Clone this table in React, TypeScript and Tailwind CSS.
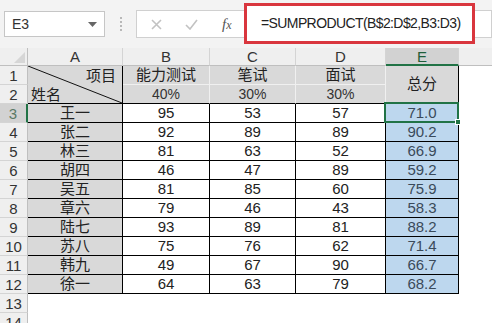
import React from 'react';

const rows = [
  ['王一', 95, 53, 57, '71.0'],
  ['张二', 92, 89, 89, '90.2'],
  ['林三', 81, 63, 52, '66.9'],
  ['胡四', 46, 47, 89, '59.2'],
  ['吴五', 81, 85, 60, '75.9'],
  ['章六', 79, 46, 43, '58.3'],
  ['陆七', 93, 89, 81, '88.2'],
  ['苏八', 75, 76, 62, '71.4'],
  ['韩九', 49, 67, 90, '66.7'],
  ['徐一', 64, 63, 79, '68.2'],
];

const font = "font-['Liberation_Sans','Noto_Sans_CJK_SC',sans-serif]";

function ColHead({ label, active }: { label: string; active?: boolean }) {
  return (
    <div
      className={`flex items-center justify-center text-[15px] leading-none border-r border-[#d4d4d4] ${
        active ? 'bg-[#d2d2d2] text-[#1e5e3a] border-b-2 border-b-[#217346]' : 'bg-[#efefef] text-[#333] border-b border-b-[#bfbfbf]'
      }`}
    >
      {label}
    </div>
  );
}

function RowHead({ n, active }: { n: number; active?: boolean }) {
  return (
    <div
      className={`flex items-center justify-center text-[15px] leading-none border-b border-[#d4d4d4] ${
        active ? 'bg-[#d2d2d2] text-[#5a7a66] border-r-2 border-r-[#217346]' : 'bg-[#efefef] text-[#333] border-r border-r-[#bfbfbf]'
      }`}
    >
      {n}
    </div>
  );
}

export default function App() {
  return (
    <div className={`w-[492px] h-[323px] overflow-hidden bg-white ${font}`}>
      {/* formula bar */}
      <div className="h-[48px] bg-[#f3f3f3] flex items-center relative">
        <div className="ml-[4px] w-[101px] h-[26px] bg-white border border-[#c6c6c6] flex items-center justify-between pl-[7px] pr-[7px] text-[14px] text-[#333]">
          <span>E3</span>
          <svg width="9" height="5" viewBox="0 0 9 5">
            <path d="M0 0 L9 0 L4.5 5 Z" fill="#666" />
          </svg>
        </div>
        <div className="ml-[15px] flex flex-col gap-[2px]">
          <span className="w-[2px] h-[2px] bg-[#b8b8b8]" />
          <span className="w-[2px] h-[2px] bg-[#b8b8b8]" />
          <span className="w-[2px] h-[2px] bg-[#b8b8b8]" />
          <span className="w-[2px] h-[2px] bg-[#b8b8b8]" />
        </div>
        <div className="ml-[14px] flex-1 h-[28px] bg-white border border-[#d0d0d0] flex items-center">
          <svg className="ml-[14px]" width="11" height="11" viewBox="0 0 11 11">
            <path d="M1 1 L10 10 M10 1 L1 10" stroke="#c2c2c2" strokeWidth="1.6" />
          </svg>
          <svg className="ml-[23px]" width="13" height="11" viewBox="0 0 13 11">
            <path d="M1 6 L5 10 L12 1" stroke="#c2c2c2" strokeWidth="1.6" fill="none" />
          </svg>
          <span className="ml-[24px] text-[15px] italic text-[#555] font-['Liberation_Serif',serif]">
            f<span className="text-[12px]">x</span>
          </span>
        </div>
        <div className="absolute left-[244px] top-[3px] w-[231px] h-[41px] border-[3px] border-[#d9363e] bg-white flex items-center pl-[14px] text-[14px] tracking-[-0.6px] text-[#222]">
          =SUMPRODUCT(B$2:D$2,B3:D3)
        </div>
      </div>

      {/* sheet */}
      <div className="relative grid grid-cols-[28px_95px_87px_86px_90px_73px_1fr] grid-rows-[18px_19px_19px_repeat(10,19px)_19px_19px]">
        <div className="bg-[#efefef] border-r border-b border-[#bfbfbf] flex items-end justify-end p-[2px]">
          <svg width="11" height="11" viewBox="0 0 11 11">
            <path d="M11 0 L11 11 L0 11 Z" fill="#d6d6d6" />
          </svg>
        </div>
        <ColHead label="A" />
        <ColHead label="B" />
        <ColHead label="C" />
        <ColHead label="D" />
        <ColHead label="E" active />
        <div className="bg-[#efefef] border-b border-[#bfbfbf]" />

        {/* row 1 */}
        <RowHead n={1} />
        <div className="row-span-2 relative bg-[#d9d9d9] border-r border-b border-black text-[15px] text-[#222]">
          <svg className="absolute inset-0" width="94" height="37" viewBox="0 0 94 37" preserveAspectRatio="none">
            <line x1="0" y1="0" x2="94" y2="37" stroke="#111" strokeWidth="1" />
          </svg>
          <span className="absolute right-[6px] top-[1px] leading-[17px]">项目</span>
          <span className="absolute left-[3px] bottom-[0px] leading-[17px]">姓名</span>
        </div>
        <div className="bg-[#d9d9d9] border-r border-b border-[#f0f0f0] flex items-center justify-center text-[15px] text-[#222]">能力测试</div>
        <div className="bg-[#d9d9d9] border-r border-b border-[#f0f0f0] flex items-center justify-center text-[15px] text-[#222]">笔试</div>
        <div className="bg-[#d9d9d9] border-r border-b border-[#f0f0f0] flex items-center justify-center text-[15px] text-[#222]">面试</div>
        <div className="row-span-2 bg-[#d9d9d9] border-r border-b border-black flex items-center justify-center text-[15px] text-[#222]">总分</div>
        <div className="row-span-2" />

        {/* row 2 */}
        <RowHead n={2} />
        <div className="bg-[#d9d9d9] border-r border-[#f0f0f0] border-b border-b-black flex items-center justify-center text-[14px] text-[#333]">40%</div>
        <div className="bg-[#d9d9d9] border-r border-[#f0f0f0] border-b border-b-black flex items-center justify-center text-[14px] text-[#333]">30%</div>
        <div className="bg-[#d9d9d9] border-r border-[#f0f0f0] border-b border-b-black flex items-center justify-center text-[14px] text-[#333]">30%</div>

        {rows.map((r, i) => (
          <React.Fragment key={i}>
            <RowHead n={i + 3} active={i === 0} />
            <div className="bg-[#d9d9d9] border-r border-b border-black flex items-center justify-center text-[15px] text-[#222]">{r[0]}</div>
            <div className="border-r border-b border-black flex items-center justify-center text-[15px] text-[#222]">{r[1]}</div>
            <div className="border-r border-b border-black flex items-center justify-center text-[15px] text-[#222]">{r[2]}</div>
            <div className="border-r border-b border-black flex items-center justify-center text-[15px] text-[#222]">{r[3]}</div>
            <div className="bg-[#bdd7ee] border-r border-b border-black flex items-center justify-center text-[15px] text-[#3a4a5a]">{r[4]}</div>
            <div />
          </React.Fragment>
        ))}

        <RowHead n={13} />
        <div className="col-span-6" />
        <RowHead n={14} />
        <div className="col-span-6" />

        {/* selection on E3 */}
        <div className="absolute left-[384px] top-[54px] w-[75px] h-[21px] border-2 border-[#217346] pointer-events-none" />
        <div className="absolute left-[455px] top-[71px] w-[6px] h-[6px] bg-[#217346] border border-white pointer-events-none" />
      </div>
    </div>
  );
}
